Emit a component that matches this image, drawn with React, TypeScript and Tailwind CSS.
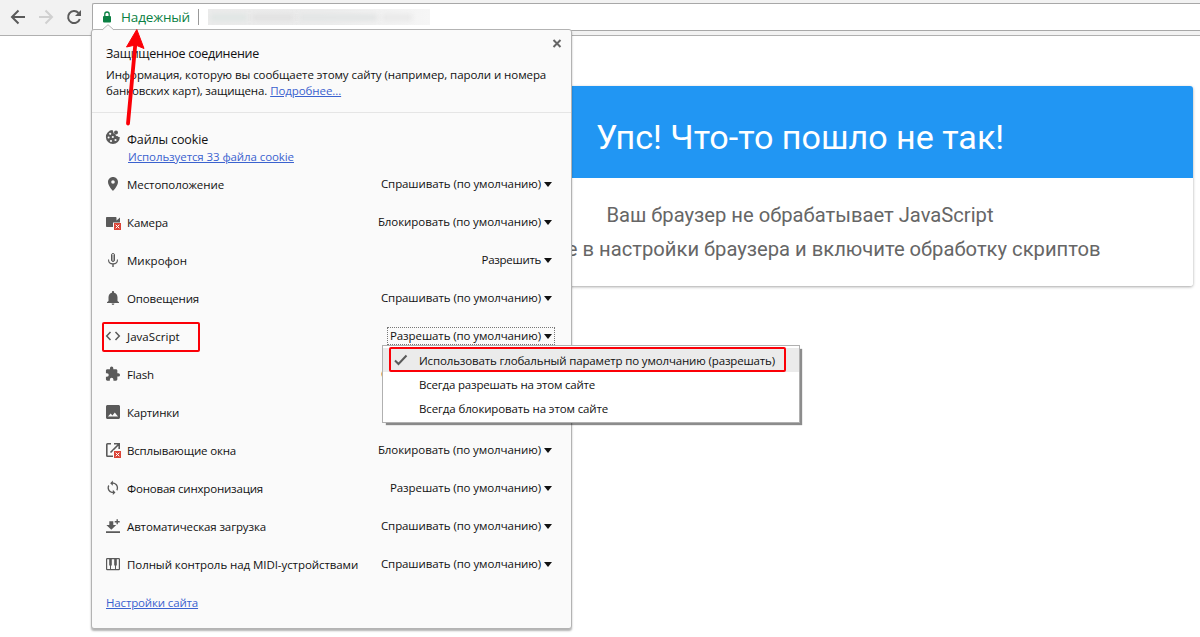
import React from "react";

type IconName =
  | "cookie" | "place" | "camera" | "mic" | "bell" | "code" | "puzzle"
  | "image" | "popup" | "sync" | "download" | "midi";

function BlockedMark() {
  return (
    <g>
      <rect x="8" y="8.500" width="7.500" height="7.500" fill="#fafafa" />
      <rect x="9" y="9" width="7" height="7" fill="#db4437" />
      <path d="M10.700 10.700l3.600 3.600M14.300 10.700l-3.600 3.600" stroke="#fff" strokeWidth="1" />
    </g>
  );
}

function Icon({ name }: { name: IconName }) {
  return (
    <svg width="16" height="16" viewBox="0 0 16 16" className="shrink-0 overflow-visible" fill="#5a5a5a">
      {name === "cookie" && (
        <g>
          <path d="M7.6 1a7 7 0 1 0 7.3 7.1c-1 .3-1.900-.1-2.300-1-1.300.2-2.300-.7-2.200-2-1.300 0-2.200-.9-2-2.100C7.900 2.500 7.500 1.800 7.600 1z" />
          <circle cx="11" cy="3.600" r="2" />
          <g fill="#fafafa">
            <circle cx="5.200" cy="4.800" r="1.100" />
            <circle cx="3.600" cy="8.500" r="1" />
            <circle cx="7.800" cy="8" r="1.100" />
            <circle cx="6" cy="12" r="1.100" />
            <circle cx="10.500" cy="11" r="1.100" />
          </g>
        </g>
      )}
      {name === "place" && (
        <path fillRule="evenodd" d="M8 1C5.200 1 3 3.200 3 6c0 3.700 5 9 5 9s5-5.300 5-9c0-2.800-2.200-5-5-5zm0 6.800a1.800 1.800 0 1 1 0-3.600 1.800 1.800 0 0 1 0 3.600z" />
      )}
      {name === "camera" && (
        <g>
          <path d="M2 3h8.500c.6 0 1 .4 1 1v2.500L15 3.500V9H9v4H2c-.6 0-1-.4-1-1V4c0-.6.4-1 1-1z" />
          <BlockedMark />
        </g>
      )}
      {name === "mic" && (
        <g fill="none" stroke="#5a5a5a">
          <rect x="6.500" y="1.500" width="3" height="8" rx="1.500" />
          <path d="M6.500 4h3M6.500 6h3M6.500 8h3M3.500 7.500c0 2.700 2 4.400 4.500 4.400s4.500-1.700 4.500-4.400" strokeWidth="1.100" />
          <path d="M8 12v3" strokeWidth="1.400" />
        </g>
      )}
      {name === "bell" && (
        <path d="M8 15c.8 0 1.400-.6 1.400-1.400H6.600C6.600 14.400 7.200 15 8 15zm4.500-4V7.200c0-2.200-1.300-4-3.400-4.500v-.5C9.100 1.500 8.600 1 8 1s-1.100.5-1.100 1.200v.5C4.800 3.200 3.500 5 3.500 7.200V11L2 12.200v.7h12v-.7L12.500 11z" />
      )}
      {name === "code" && (
        <path d="M5.500 4L1.700 8l3.800 4M10.500 4l3.800 4-3.800 4" fill="none" stroke="#5a5a5a" strokeWidth="1.500" />
      )}
      {name === "puzzle" && (
        <path transform="translate(-.4 -.1) scale(.67)" d="M20.500 11H19V7c0-1.100-.9-2-2-2h-4V3.500a2.500 2.500 0 0 0-5 0V5H4c-1.100 0-2 .9-2 2v3.800h1.500a2.700 2.700 0 0 1 0 5.400H2V20c0 1.100.9 2 2 2h3.800v-1.500a2.700 2.700 0 0 1 5.400 0V22H17c1.100 0 2-.9 2-2v-4h1.500a2.500 2.500 0 0 0 0-5z" />
      )}
      {name === "image" && (
        <path fillRule="evenodd" d="M2.500 1h11c.8 0 1.500.7 1.500 1.500v11c0 .8-.7 1.500-1.500 1.500h-11C1.700 15 1 14.300 1 13.500v-11C1 1.700 1.700 1 2.500 1zM3 12.600h10L9.800 8.600l-2.400 3-1.700-2z" />
      )}
      {name === "popup" && (
        <g>
          <path d="M6 1.800H2.500a.7.7 0 0 0-.7.7v11c0 .4.3.7.7.7H8M9 1.800h5.200V7M14 2L5.500 10.500" fill="none" stroke="#5a5a5a" strokeWidth="1.600" />
          <BlockedMark />
        </g>
      )}
      {name === "sync" && (
        <path transform="translate(-.1 -.1) scale(.66)" d="M12 4V1L8 5l4 4V6c3.310 0 6 2.690 6 6 0 1.010-.25 1.970-.7 2.800l1.460 1.460A7.930 7.930 0 0 0 20 12c0-4.420-3.580-8-8-8zm0 14c-3.310 0-6-2.690-6-6 0-1.010.25-1.970.7-2.800L5.240 7.740A7.930 7.930 0 0 0 4 12c0 4.420 3.580 8 8 8v3l4-4-4-4v3z" />
      )}
      {name === "download" && (
        <path d="M4.300 3.200h4V7h2.900L6.300 11.800 1.400 7h2.900zM1 13.300h14V15H1zM9.700 3h5v1.400h-5zM11.500 1.200h1.400v5h-1.400z" />
      )}
      {name === "midi" && (
        <g fill="none" stroke="#5a5a5a">
          <rect x="1.600" y="2.600" width="12.800" height="11" rx=".6" strokeWidth="1.200" />
          <path d="M5.500 8.500v5M10.500 8.500v5" strokeWidth="1" />
          <path d="M5.500 2.500v7M10.500 2.500v7" strokeWidth="2.600" />
        </g>
      )}
    </svg>
  );
}

type Permission = { text: string; tracking: string };
type Row = { icon: IconName; label: string; tracking: string; value: Permission; focused?: boolean };

const ASK: Permission = { text: "Спрашивать (по умолчанию)", tracking: "tracking-[-0.1px]" };
const BLOCK: Permission = { text: "Блокировать (по умолчанию)", tracking: "tracking-[-0.07px]" };
const ALLOW: Permission = { text: "Разрешать (по умолчанию)", tracking: "tracking-[-0.09px]" };
const ALLOWED: Permission = { text: "Разрешить", tracking: "tracking-[-0.3px]" };

const rows: Row[] = [
  { icon: "place", label: "Местоположение", tracking: "tracking-[-0.08px]", value: ASK },
  { icon: "camera", label: "Камера", tracking: "tracking-[-0.1px]", value: BLOCK },
  { icon: "mic", label: "Микрофон", tracking: "tracking-normal", value: ALLOWED },
  { icon: "bell", label: "Оповещения", tracking: "tracking-[-0.18px]", value: ASK },
  { icon: "code", label: "JavaScript", tracking: "tracking-[0.05px]", value: ALLOW, focused: true },
  { icon: "puzzle", label: "Flash", tracking: "tracking-[-0.16px]", value: ASK },
  { icon: "image", label: "Картинки", tracking: "tracking-[-0.2px]", value: ALLOW },
  { icon: "popup", label: "Всплывающие окна", tracking: "tracking-[-0.16px]", value: BLOCK },
  { icon: "sync", label: "Фоновая синхронизация", tracking: "tracking-[-0.2px]", value: ALLOW },
  { icon: "download", label: "Автоматическая загрузка", tracking: "tracking-[-0.13px]", value: ASK },
  { icon: "midi", label: "Полный контроль над MIDI-устройствами", tracking: "tracking-[-0.07px]", value: ASK },
];

function PermissionRow({ row }: { row: Row }) {
  return (
    <div className="flex h-[38px] items-center justify-between pl-[14px] pr-[16px]">
      <div className="flex items-center gap-[6px]">
        <Icon name={row.icon} />
        <span className={`mt-px ${row.tracking}`}>{row.label}</span>
      </div>
      <div
        className={`flex h-[18px] items-center gap-[3px] border border-dotted px-[2px] ${
          row.focused ? "border-[#777]" : "border-transparent"
        }`}
      >
        <span className={row.value.tracking}>{row.value.text}</span>
        <svg width="8" height="5" viewBox="0 0 8 5"><path d="M0 0h8L4 5z" fill="#111" /></svg>
      </div>
    </div>
  );
}

function SiteInfoPopup() {
  return (
    <section className="absolute left-[91px] top-[29px] h-[600px] w-[481px] rounded-[3px] border border-[#b3b3b3] bg-[#fafafa] shadow-[0_2px_2px_rgba(0,0,0,0.3)]">
      <svg className="absolute left-[9px] top-[-6px]" width="14" height="7" viewBox="0 0 14 7">
        <path d="M1 6.500L7 .5l6 6V7H1z" fill="#fafafa" />
        <path d="M1 6L7 .7 13 6" fill="none" stroke="#b3b3b3" />
      </svg>
      <div className="h-[83px] border-b border-[#e5e5e5] pl-[14px] pt-[14px]">
        <div className="flex items-start justify-between pr-[9px]">
          <h2 className="-mb-px pt-px text-[12.5px] leading-[18px] tracking-[-0.27px]">Защищенное соединение</h2>
          <svg className="-mt-[6px]" width="10" height="10" viewBox="0 0 10 10"><path d="M1.500 2l7 7M8.500 2l-7 7" stroke="#666" strokeWidth="2" /></svg>
        </div>
        <p className="mt-[5px] whitespace-nowrap leading-4">
          <span className="tracking-[-0.07px]">Информация, которую вы сообщаете этому сайту (например, пароли и номера</span>
          <br />
          <span className="tracking-[-0.14px]">банковских карт), защищена.</span>{" "}
          <a className="tracking-[-0.08px] text-[#3a62cf] underline">Подробнее...</a>
        </p>
      </div>
      <div className="flex h-[52px] items-start gap-[6px] pl-[13px] pt-[16px]">
        <Icon name="cookie" />
        <div className="flex flex-col pt-[2px]">
          <span className="text-[12.5px] leading-[17px] tracking-[-0.13px]">Файлы cookie</span>
          <a className="pl-px leading-[18px] tracking-[-0.09px] text-[#3a62cf] underline">Используется 33 файла cookie</a>
        </div>
      </div>
      <div className="-ml-px">
        {rows.map((row) => <PermissionRow key={row.label} row={row} />)}
      </div>
      <a className="ml-[14px] block pt-[11px] leading-[18px] tracking-[-0.15px] text-[#3a62cf] underline">Настройки сайта</a>
    </section>
  );
}

function PermissionMenu() {
  return (
    <ul className="absolute left-[382px] top-[345px] h-[78px] w-[418px] border border-[#b0b0b0] bg-white pt-[2px] leading-[25px] shadow-[3px_3px_1px_-1px_rgba(0,0,0,0.45)]">
      <li className="flex h-6 items-center bg-[#ebebeb] pl-[11px]">
        <svg width="14" height="12" viewBox="0 0 14 12"><path d="M1 6.500l3.500 3.500L12.500 1.500" fill="none" stroke="#5a5a5a" strokeWidth="2" /></svg>
        <span className="pl-[11px] pt-px tracking-[-0.147px]">Использовать глобальный параметр по умолчанию (разрешать)</span>
      </li>
      <li className="h-6 pl-9 tracking-[-0.19px]">Всегда разрешать на этом сайте</li>
      <li className="h-6 pl-9 tracking-[-0.13px]">Всегда блокировать на этом сайте</li>
    </ul>
  );
}

export default function App() {
  return (
    <div className="relative h-[637px] w-[1200px] overflow-hidden bg-white font-['Open_Sans','Noto_Sans',sans-serif] text-[11.5px] text-[#111]">
      <header className="flex h-9 items-start border-b border-[#b0b0b0] bg-[#f2f2f2]">
        <div className="flex w-[92px] shrink-0 items-center gap-3 pl-[10px] pt-[9px]">
          <svg width="16" height="16" viewBox="0 0 16 16" fill="none" stroke="#5a5a5a" strokeWidth="2"><path d="M15 8H2.500M8.500 1.500L2 8l6.500 6.500" /></svg>
          <svg width="16" height="16" viewBox="0 0 16 16" fill="none" stroke="#d0d0d0" strokeWidth="2"><path d="M1 8h12.500M7.500 1.500L14 8l-6.500 6.500" /></svg>
          <svg width="16" height="16" viewBox="0 0 16 16" fill="none" stroke="#5a5a5a" strokeWidth="2"><path d="M13.800 10A6 6 0 1 1 12.500 4" /><path d="M15 1v6H9z" fill="#5a5a5a" stroke="none" /></svg>
        </div>
        <div className="mt-[3px] flex h-[28px] flex-1 items-center rounded-l-[2px] border border-r-0 border-[#a8a8a8] bg-white pl-[9px]">
          <svg width="10" height="12" viewBox="0 0 10 12"><rect x="1" y="5" width="8" height="6.500" rx="1" fill="#0b8043" /><path d="M2.800 5.500V3.200a2.200 2.200 0 0 1 4.400 0v2.300" fill="none" stroke="#0b8043" strokeWidth="1.300" /></svg>
          <span className="ml-[9px] w-[77px] whitespace-nowrap text-[13.5px] tracking-[-0.15px] text-[#0b8043]">Надежный</span>
          <span className="h-4 w-px bg-[#999]" />
          <span className="ml-[9px] flex h-4 w-[222px] items-center gap-[5px] overflow-hidden bg-linear-to-r from-[#ebebeb] via-[#ececec] to-[#f6f6f6] pl-[3px]">
            <span className="h-[7px] w-[36px] bg-[#e0e6e4] blur-[2px]" />
            <span className="h-[7px] w-[42px] bg-[#e2e2e2] blur-[2px]" />
            <span className="h-[7px] w-[78px] bg-[#e3e5e5] blur-[2px]" />
            <span className="h-[7px] w-[30px] bg-[#e9e9e9] blur-[2px]" />
          </span>
        </div>
      </header>

      <main className="flex justify-end pr-[7px] pt-[50px] font-[Roboto,sans-serif]">
        <article className="w-[786px] overflow-hidden rounded-[3px] text-center shadow-[0_1px_3px_rgba(0,0,0,0.35)]">
          <h1 className="h-[92px] bg-[#2196f3] text-[34.100px] leading-[102px] text-white">Упс! Что-то пошло не так!</h1>
          <p className="h-[108px] whitespace-nowrap bg-white pt-[20px] text-[20.2px] leading-[34px] text-[#666]">
            Ваш браузер не обрабатывает JavaScript
            <br />
            Зайдите в настройки браузера и включите обработку скриптов
          </p>
        </article>
      </main>

      <SiteInfoPopup />
      <PermissionMenu />

      <div className="absolute left-[102px] top-[322px] h-[30px] w-[98px] rounded-[2px] border-2 border-[#fb0007]" />
      <div className="absolute left-[389px] top-[347px] h-[25px] w-[397px] rounded-[2px] border-2 border-[#fb0007]" />
      <svg className="absolute left-[120px] top-[26px]" width="30" height="102" viewBox="0 0 30 102">
        <path d="M8 97.500L15.500 16" stroke="#fb0007" strokeWidth="3.800" strokeLinecap="round" />
        <path d="M16.800 3.500L24 22.500 15.500 19 6.500 21z" fill="#fb0007" stroke="#fb0007" strokeLinejoin="round" />
      </svg>
    </div>
  );
}
